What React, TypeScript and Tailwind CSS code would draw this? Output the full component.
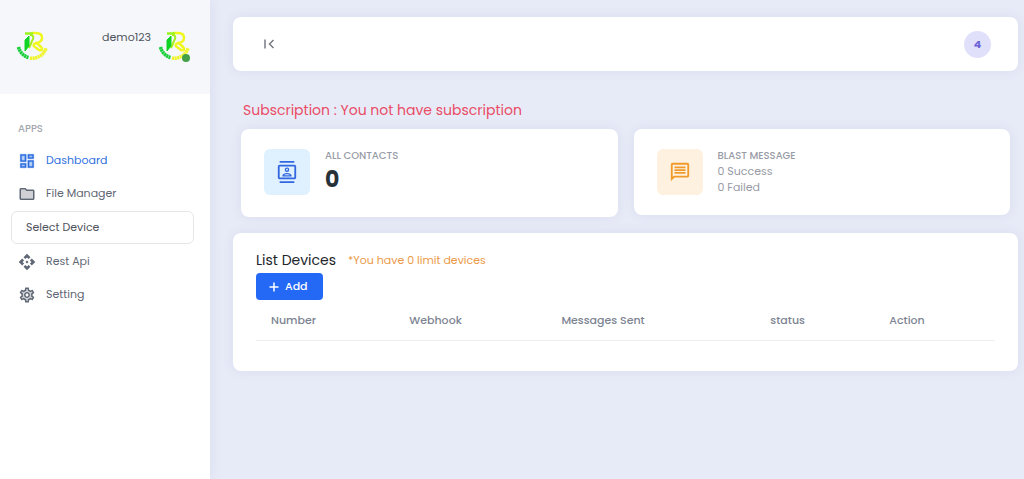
import clsx from "clsx";
import { MdApi, MdOutlineContacts, MdOutlineMessage } from "react-icons/md";
import type { ReactNode } from "react";

const DashboardIcon = () => (
  <svg viewBox="0 0 24 24" className="size-[18px]" fill="currentColor">
    <path opacity=".3" d="M5 5h4v6H5zm10 8h4v6h-4zM5 17h4v2H5zM15 5h4v2h-4z" />
    <path
      d="M3 13h8V3H3v10zm2-8h4v6H5V5zm8 16h8V11h-8v10zm2-8h4v6h-4v-6zM13 3v6h8V3h-8zm6 4h-4V5h4v2zM3 21h8v-6H3v6zm2-4h4v2H5v-2z"
      stroke="currentColor"
      strokeWidth=".4"
    />
  </svg>
);

const FolderIcon = () => (
  <svg viewBox="0 0 24 24" className="size-[18px]" fill="currentColor">
    <path opacity=".3" d="M11.17 8l-2-2H4v12h16V8h-8z" />
    <path d="M20 6h-8l-2-2H4c-1.1 0-1.99.9-1.99 2L2 18c0 1.1.9 2 2 2h16c1.1 0 2-.9 2-2V8c0-1.1-.9-2-2-2zm0 12H4V6h5.17l2 2H20v10z" />
  </svg>
);

const SettingIcon = () => (
  <svg viewBox="0 0 24 24" className="size-[18px]" fill="currentColor">
    <path
      opacity=".3"
      d="M19.28 8.6l-.7-1.21-1.27.51-1.06.43-.91-.7c-.39-.3-.8-.54-1.23-.71l-1.06-.43-.16-1.13L12.7 4h-1.4l-.19 1.35-.16 1.13-1.06.44c-.41.17-.82.41-1.25.73l-.9.68-1.05-.42-1.27-.52-.7 1.21 1.08.84.89.7-.14 1.13c-.03.3-.05.53-.05.73s.02.43.05.73l.14 1.13-.89.7-1.08.84.7 1.21 1.27-.51 1.06-.43.91.7c.39.3.8.54 1.23.71l1.06.43.16 1.13.19 1.36h1.39l.19-1.35.16-1.13 1.06-.43c.41-.17.82-.41 1.25-.73l.9-.68 1.04.42 1.27.51.7-1.21-1.08-.84-.89-.7.14-1.13c.04-.31.05-.52.05-.73 0-.21-.02-.43-.05-.73l-.14-1.13.89-.7 1.1-.84zM12 16c-2.21 0-4-1.79-4-4s1.79-4 4-4 4 1.79 4 4-1.79 4-4 4z"
    />
    <path d="M19.43 12.98c.04-.32.07-.64.07-.98 0-.34-.03-.66-.07-.98l2.11-1.65c.19-.15.24-.42.12-.64l-2-3.46c-.09-.16-.26-.25-.44-.25-.06 0-.12.01-.17.03l-2.49 1c-.52-.4-1.08-.73-1.69-.98l-.38-2.65C14.46 2.18 14.25 2 14 2h-4c-.25 0-.46.18-.49.42l-.38 2.65c-.61.25-1.17.59-1.69.98l-2.49-1c-.06-.02-.12-.03-.18-.03-.17 0-.34.09-.43.25l-2 3.46c-.13.22-.07.49.12.64l2.11 1.65c-.04.32-.07.65-.07.98 0 .33.03.66.07.98l-2.11 1.65c-.19.15-.24.42-.12.64l2 3.46c.09.16.26.25.44.25.06 0 .12-.01.17-.03l2.49-1c.52.4 1.08.73 1.69.98l.38 2.65c.03.24.24.42.49.42h4c.25 0 .46-.18.49-.42l.38-2.65c.61-.25 1.17-.59 1.69-.98l2.49 1c.06.02.12.03.18.03.17 0 .34-.09.43-.25l2-3.46c.12-.22.07-.49-.12-.64l-2.11-1.65zm-1.98-1.71c.04.31.05.52.05.73 0 .21-.02.43-.05.73l-.14 1.13.89.7 1.08.84-.7 1.21-1.27-.51-1.04-.42-.9.68c-.43.32-.84.56-1.25.73l-1.06.43-.16 1.13-.2 1.35h-1.4l-.19-1.35-.16-1.13-1.06-.43c-.43-.18-.83-.41-1.23-.71l-.91-.7-1.06.43-1.27.51-.7-1.21 1.08-.84.89-.7-.14-1.13c-.03-.31-.05-.54-.05-.74s.02-.43.05-.73l.14-1.13-.89-.7-1.08-.84.7-1.21 1.27.51 1.04.42.9-.68c.43-.32.84-.56 1.25-.73l1.06-.43.16-1.13.2-1.35h1.39l.19 1.35.16 1.13 1.06.43c.43.18.83.41 1.23.71l.91.7 1.06-.43 1.27-.51.7 1.21-1.07.85-.89.7.14 1.13zM12 8c-2.21 0-4 1.79-4 4s1.79 4 4 4 4-1.79 4-4-1.79-4-4-4zm0 6c-1.1 0-2-.9-2-2s.9-2 2-2 2 .9 2 2-.9 2-2 2z" />
  </svg>
);

const FirstPageIcon = () => (
  <svg
    viewBox="0 0 16 16"
    className="size-4"
    fill="none"
    stroke="currentColor"
    strokeWidth="1.500"
  >
    <path d="M4 3.500v9M12.500 4L8.500 8l4 4" />
  </svg>
);

const PlusIcon = () => (
  <svg
    viewBox="0 0 14 14"
    className="size-[14px]"
    fill="none"
    stroke="currentColor"
    strokeWidth="1.500"
  >
    <path d="M7 2.500v9M2.500 7h9" />
  </svg>
);

const Logo = () => (
  <svg viewBox="0 0 32 32" className="size-8" fill="none">
    <path
      d="M15 3h5c4 0 6 2 6 5s-3 5-6 5c-3 1-3 3-1 4l4 3c3 1 4-1 2-3l-4-4"
      stroke="#f0f71c"
      strokeWidth="2.500"
    />
    <path d="M9 3.500h8" stroke="#9af51e" strokeWidth="2.500" />
    <path d="M14 5c4 0 4 3 2 6l-3 7" stroke="#a5ee1c" strokeWidth="2" />
    <path d="M9 10l4-4v10l-4 5z" fill="#10d424" stroke="#10d424" />
    {/* lettering ring */}
    <path
      d="M2.500 17A14 14 0 0 0 12.500 27.500"
      stroke="#18cf38"
      strokeWidth="3.500"
      strokeDasharray="2.200 .4"
    />
    <path
      d="M14 28A14 14 0 0 0 30 18"
      stroke="#eff52a"
      strokeWidth="3.500"
      strokeDasharray="2.200 .4"
    />
  </svg>
);

const NavItem = ({
  icon,
  label,
  active,
}: {
  icon: ReactNode;
  label: string;
  active?: boolean;
}) => (
  <a
    href="#"
    className={clsx(
      "flex h-[33px] items-center gap-[10px] px-[18px] text-[11px]",
      active ? "text-[#2f6fe0]" : "text-[#5f6775]"
    )}
  >
    {icon}
    <span>{label}</span>
  </a>
);

const Card = ({
  className,
  children,
}: {
  className?: string;
  children: ReactNode;
}) => (
  <section
    className={clsx(
      "rounded-lg bg-white shadow-[0_0_12px_rgba(94,92,154,0.09)]",
      className
    )}
  >
    {children}
  </section>
);

const App = () => {
  return (
    <div className="flex min-h-screen bg-[#e7ebf7] font-[Poppins,Inter,sans-serif] text-[#5f6775]">
      <aside className="w-[210px] shrink-0 bg-white shadow-[0_0_12px_rgba(94,92,154,0.09)]">
        <div className="flex h-[94px] items-start justify-between bg-[#f5f7fb] pt-[30px] pr-5 pl-4">
          <Logo />
          <div className="flex gap-[7px]">
            <span className="text-[11px] leading-[14px] text-[#4f545c]">
              demo123
            </span>
            <div className="relative">
              <Logo />
              <span className="absolute right-0 bottom-0 size-2 rounded-full bg-[#43a047]" />
            </div>
          </div>
        </div>

        <nav className="pt-7">
          <h6 className="mb-2 px-[18px] text-[10px] leading-[14px] font-medium text-[#a4a8ae]">
            APPS
          </h6>
          <NavItem icon={<DashboardIcon />} label="Dashboard" active />
          <NavItem icon={<FolderIcon />} label="File Manager" />
          <div className="mt-px mr-4 mb-px ml-[11px]">
            <select
              aria-label="Select Device"
              className="block h-[33px] w-full appearance-none rounded-md border border-[#e4e6ea] bg-white px-[14px] text-[11px] text-[#4f545c]"
            >
              <option>Select Device</option>
            </select>
          </div>
          <NavItem icon={<MdApi className="size-[18px]" />} label="Rest Api" />
          <NavItem icon={<SettingIcon />} label="Setting" />
        </nav>
      </aside>

      <main className="min-w-0 flex-1 pt-[17px] pr-[6px] pb-6 pl-[23px]">
        <header className="flex h-[54px] items-center justify-between rounded-lg bg-white pr-[27px] pl-7 shadow-[0_0_12px_rgba(94,92,154,0.09)]">
          <button aria-label="Collapse menu" className="text-[#777b82]">
            <FirstPageIcon />
          </button>
          <span className="flex size-[27px] items-center justify-center rounded-full bg-[#e0e0fb] text-[11px] font-bold text-[#6a63d6]">
            4
          </span>
        </header>

        <div className="px-2 pt-7">
          <h5 className="mb-2 px-[2px] text-[14px] leading-[22px] text-[#ea4c66]">
            Subscription : You not have subscription
          </h5>
          <div className="grid grid-cols-2 items-start gap-4">
            <Card className="flex h-[88px] gap-[15px] px-[23px] pt-5">
              <div className="flex size-[46px] items-center justify-center rounded-md bg-[#dff0ff] text-[#3367e0]">
                <MdOutlineContacts className="size-[22px]" />
              </div>
              <div>
                <p className="text-[10px] leading-[14px] font-medium text-[#989ba6]">
                  ALL CONTACTS
                </p>
                <p className="text-[22px] leading-[34px] font-bold text-[#263238]">
                  0
                </p>
              </div>
            </Card>
            <Card className="flex h-[86px] gap-[15px] px-[23px] pt-5">
              <div className="flex size-[46px] items-center justify-center rounded-md bg-[#fff1e0] text-[#ef9a2b]">
                <MdOutlineMessage className="size-[22px]" />
              </div>
              <div className="text-[#989ba6]">
                <p className="text-[10px] leading-[14px] font-medium">
                  BLAST MESSAGE
                </p>
                <p className="text-[11px] leading-4">0 Success</p>
                <p className="text-[11px] leading-4">0 Failed</p>
              </div>
            </Card>
          </div>
        </div>

        <Card className="mt-4 px-[23px] pt-4 pb-[30px]">
          <div className="flex items-center gap-3">
            <h5 className="text-[14px] leading-[22px] text-[#212529]">
              List Devices
            </h5>
            <span className="text-[11px] text-[#eb9a48]">
              *You have 0 limit devices
            </span>
          </div>
          <button className="mt-[2px] flex h-[27px] items-center gap-1 rounded-[4px] bg-[#2369f5] pr-[15px] pl-[11px] text-[11px] font-medium text-white">
            <PlusIcon />
            Add
          </button>
          <table className="w-full text-left text-[11px] text-[#7d8492]">
            <thead>
              <tr className="h-10 border-b border-[#eceef1]">
                <th className="px-[15px] font-medium">Number</th>
                <th className="px-[15px] font-medium">Webhook</th>
                <th className="px-[15px] font-medium">Messages Sent</th>
                <th className="px-[15px] font-medium">status</th>
                <th className="px-[15px] font-medium">Action</th>
              </tr>
            </thead>
            <tbody />
          </table>
        </Card>
      </main>
    </div>
  );
};

export default App;
